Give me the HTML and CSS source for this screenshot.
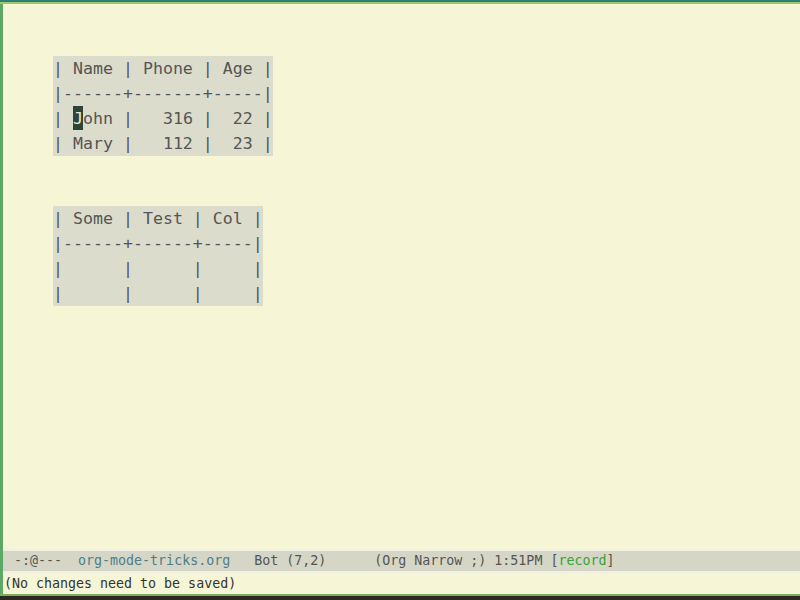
FILE: index.html
```html
<!DOCTYPE html>
<html>
<head>
<meta charset="utf-8">
<link rel="stylesheet" href="styles.css">
</head>
<body>
<div class="frame">
  <div class="topbar"></div>
  <div class="main">
    <div class="buffer">
      <div class="table"><div class="line">| Name | Phone | Age |</div><div class="line">|------+-------+-----|</div><div class="line">| <span class="cursor">J</span>ohn |   316 |  22 |</div><div class="line">| Mary |   112 |  23 |</div></div>
      <div class="table second"><div class="line">| Some | Test | Col |</div><div class="line">|------+------+-----|</div><div class="line">|      |      |     |</div><div class="line">|      |      |     |</div></div>
    </div>
    <div class="modeline"> -:@---  <span class="fname">org-mode-tricks.org</span>   Bot (7,2)      (Org Narrow ;) 1:51PM [<span class="rec">record</span>]</div>
    <div class="echo">(No changes need to be saved)</div>
  </div>
  <div class="bottombar"></div>
</div>
</body>
</html>
```

FILE: styles.css
```css
html, body {
  margin: 0;
  padding: 0;
}
body {
  width: 800px;
  height: 600px;
  overflow: hidden;
  background: #f6f6d6;
}
.frame {
  display: flex;
  flex-direction: column;
  height: 600px;
}
.topbar {
  height: 4px;
  background: linear-gradient(to bottom, #2f7f78 0, #2f7f78 2px, #9cc870 2px, #9cc870 4px);
}
.main {
  flex: 1;
  display: flex;
  flex-direction: column;
  border-left: 3px solid #5ea866;
  min-height: 0;
}
.buffer {
  flex: 1;
  padding: 52px 0 0 50px;
  font-family: "DejaVu Sans Mono", monospace;
  font-size: 16.6px;
  color: #555555;
}
.table {
  display: inline-block;
  background: #dcdccc;
  vertical-align: top;
}
.buffer .table + .table {
  display: block;
  width: fit-content;
  margin-top: 50px;
}
.buffer .table:first-child {
  display: block;
  width: fit-content;
}
.line {
  white-space: pre;
  height: 25px;
  line-height: 25px;
}
.cursor {
  display: inline-block;
  background: #2f4438;
  color: #e8e8d8;
  line-height: 25px;
  height: 24px;
  vertical-align: top;
}
.modeline {
  height: 20px;
  border-top: 2px solid #efefe6;
  border-bottom: 2px solid #efefe6;
  background: #d6d6c6;
  font-family: "DejaVu Sans Mono", monospace;
  font-size: 13.3px;
  line-height: 20px;
  color: #555555;
  white-space: pre;
  padding-left: 3px;
}
.fname {
  color: #4d7d8c;
}
.rec {
  color: #36a336;
}
.echo {
  height: 21px;
  font-family: "DejaVu Sans Mono", monospace;
  font-size: 13.3px;
  line-height: 21px;
  color: #333333;
  white-space: pre;
  padding-left: 1px;
}
.bottombar {
  height: 6px;
  background: linear-gradient(to bottom, #7cab62 0, #7cab62 2px, #2a2a20 2px, #2a2a20 6px);
}
```
